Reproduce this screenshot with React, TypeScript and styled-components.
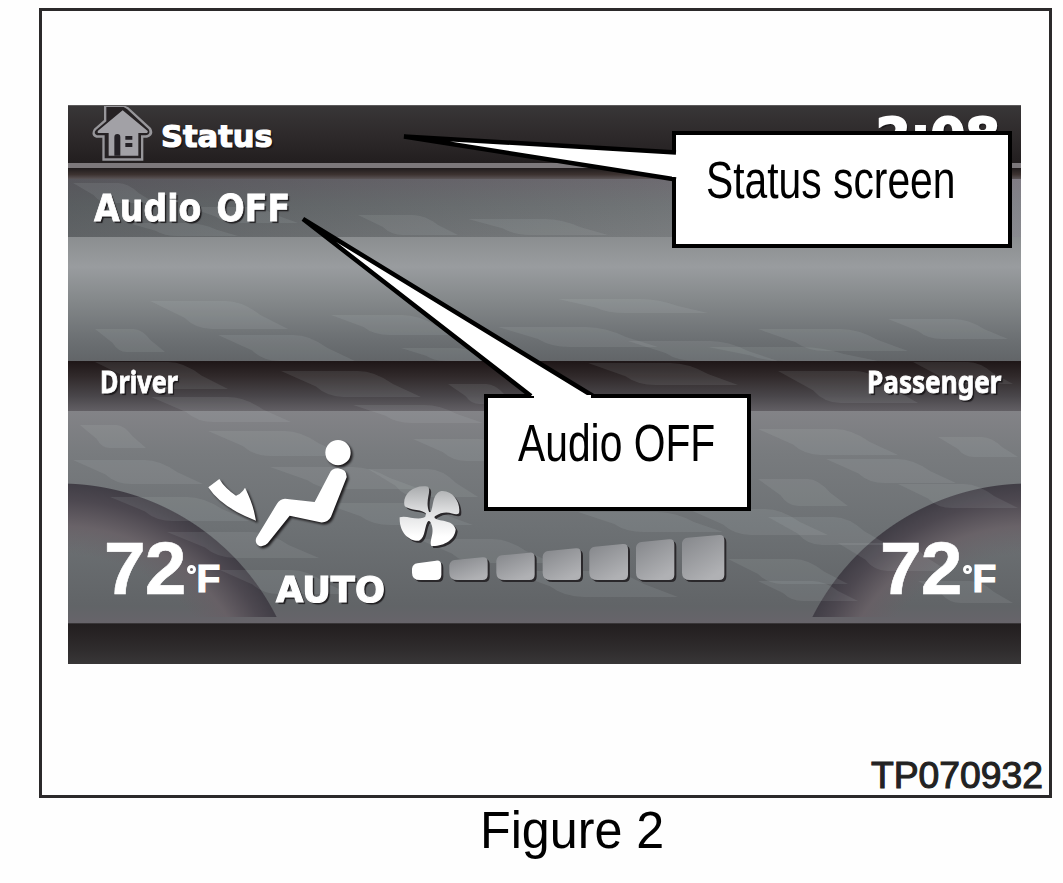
import React from 'react';
import styled, { createGlobalStyle } from 'styled-components';

const GlobalStyle = createGlobalStyle`
  *, *::before {
    box-sizing: border-box;
  }
  body {
    margin: 0;
    background-color: #fefefe;
    font-family: 'Liberation Sans', Arial, sans-serif;
  }
`;

const Page = styled.div`
  display: flex;
  flex-direction: column;
  width: 1063px;
  height: 883px;
  padding: 8px 11px 0 39px;
  overflow: hidden;
`;

const Frame = styled.div`
  display: flex;
  flex-direction: column;
  height: 790px;
  padding: 94px 26px 0;
  border: 3px solid #2b292a;
`;

const Screen = styled.div`
  position: relative;
  display: flex;
  flex-direction: column;
  width: 953px;
  height: 559px;
  color: #fff;
`;

const Header = styled.div`
  display: flex;
  justify-content: space-between;
  height: 58px;
  padding: 0 21px 0 23px;
  border-top: 1px solid #5c5a5b;
  background: linear-gradient(#383637, #2e2a2b 50%, #221e1f);
`;

const HeaderTitle = styled.div`
  display: flex;
  gap: 8px;

  svg {
    display: block;
  }
`;

const Text = styled.div<{
  $size: number;
  $line: number;
  $scale?: number;
  $stroke?: number;
  $right?: boolean;
  $font?: string;
}>`
  font-family: ${(p) => p.$font || "'DejaVu Sans'"}, sans-serif;
  font-size: ${(p) => p.$size}px;
  line-height: ${(p) => p.$line}px;
  font-weight: bold;
  white-space: nowrap;
  word-spacing: 4px;
  -webkit-text-stroke: ${(p) => p.$stroke || 0}px #fff;
  transform: scaleX(${(p) => p.$scale || 1});
  transform-origin: ${(p) => (p.$right ? 'right' : 'left')} center;
  text-shadow: 2px 2px 1px rgba(20, 18, 20, 0.85);
`;

const Divider = styled.div`
  height: 16px;
  border-top: 5px solid #7c787b;
  background: linear-gradient(#1f1b1c, #3d3331 60%, #5b5557);
`;

const AudioRow = styled.div`
  height: 58px;
  padding: 0 26px;
  background:
    linear-gradient(90deg, rgba(20, 24, 28, 0.28), rgba(20, 24, 28, 0.05) 60%, rgba(190, 180, 200, 0.2)),
    linear-gradient(#716e74, #74787a 45%, #7d8082);
`;

const AudioBody = styled.div`
  height: 124px;
  background: linear-gradient(#8b8e90, #999c9f 24%, #85898b 50%, #6c7073 82%, #626568);
`;

const ZoneBand = styled.div`
  display: flex;
  justify-content: space-between;
  height: 50px;
  padding: 0 20px 0 32px;
  background: linear-gradient(#1e1617, #30292a 30%, #49464a 70%, #625f64);
`;

const Climate = styled.div`
  display: flex;
  height: 212px;
  background:
    radial-gradient(circle 243px at -8px 315px, transparent 172px, rgba(104, 95, 101, 0.8) 200px, #4d4850 226px, #413e46 242px, transparent 243px) 0 0 / 100% 206px no-repeat,
    radial-gradient(circle 243px at 961px 315px, transparent 172px, rgba(104, 95, 101, 0.8) 200px, #4d4850 226px, #413e46 242px, transparent 243px) 0 0 / 100% 206px no-repeat,
    linear-gradient(#838387, #787b7e 20%, #6d7174 55%, #616467 92%, #67646a);
`;

const Footer = styled.div`
  flex: 1;
  background: linear-gradient(#221e1f, #2e2b2c 60%, #383637);
  border-top: 1px solid #383537;
`;

const Temperature = styled.div`
  position: relative;
  display: flex;
  align-items: flex-start;
  width: 139px;
  padding: 117px 0 0 36px;
  font-weight: bold;
`;

const Degrees = styled.span`
  font-size: 75px;
  line-height: 80px;
  letter-spacing: -1px;
  -webkit-text-stroke: 0.6px #fff;
`;

const Unit = styled.span`
  display: flex;
  font-size: 39px;
  line-height: 40px;
  padding-top: 31px;
  -webkit-text-stroke: 1.2px #fff;

  &::before {
    content: '';
    width: 9px;
    height: 9px;
    margin: 6px 0 0 2px;
    border: 3.5px solid #fff;
    border-radius: 50%;
  }
`;

const Airflow = styled.div`
  display: flex;
  flex-direction: column;
  width: 191px;
  padding-top: 25px;

  svg {
    display: block;
    overflow: visible;
    filter: drop-shadow(2px 2px 1px #1c1a1c);
  }
`;

const AutoLabel = styled.div`
  padding: 16px 0 0 69px;
`;

const Fan = styled.div`
  display: flex;
  flex-direction: column;
  width: 446px;
  padding-top: 74px;

  svg {
    display: block;
    overflow: visible;
    filter: drop-shadow(2.5px 2px 0.5px #2a282b);
  }
`;

const FanLevels = styled.div`
  padding: 0 0 0 14px;
  margin-top: -13px;
`;

const Texture = styled.svg`
  position: absolute;
  left: 0;
  top: 74px;
  pointer-events: none;
`;

const Callout = styled.div<{ $x: number; $y: number; $w: number; $h: number }>`
  position: absolute;
  left: ${(p) => p.$x}px;
  top: ${(p) => p.$y}px;
  width: ${(p) => p.$w}px;
  height: ${(p) => p.$h}px;
  padding: 18px 0 0 30px;
  border: 4px solid #000;
  background-color: #fff;
  color: #000;
`;

const CalloutText = styled.div<{ $scale: number }>`
  font-size: 51px;
  line-height: 56px;
  white-space: nowrap;
  transform: scaleX(${(p) => p.$scale});
  transform-origin: left center;
`;

const Pointers = styled.svg`
  position: absolute;
  left: 0;
  top: 0;
  pointer-events: none;
`;

const DrawingNumber = styled.div`
  margin: auto -20px 0 0;
  align-self: flex-end;
  color: #222;
  font-size: 37.3px;
  line-height: 40px;
  -webkit-text-stroke: 1.1px #222;
`;

const Caption = styled.div`
  padding: 5px 0 0 440px;
  color: #000;
  font-size: 51px;
  line-height: 56px;
  white-space: nowrap;
  transform: scaleX(0.985);
`;

// x, y, width, height of each light streak behind the panels
const streaks = [
  [5, 4, 82, 20], [60, 44, 110, 13], [120, 28, 110, 16], [290, 36, 100, 20], [400, 40, 140, 16],
  [82, 122, 138, 28], [27, 150, 70, 23], [150, 156, 137, 26], [263, 136, 130, 20], [333, 169, 100, 13],
  [430, 148, 160, 20], [560, 162, 150, 20], [690, 150, 150, 22], [820, 140, 120, 20], [490, 120, 150, 14], [640, 168, 170, 14],
  [27, 183, 133, 27], [213, 192, 140, 26], [83, 218, 140, 25], [285, 226, 130, 18], [380, 205, 70, 20],
  [520, 184, 150, 22], [710, 192, 140, 32], [845, 183, 100, 22],
  [12, 246, 66, 23], [140, 252, 139, 25], [345, 260, 120, 22], [690, 250, 140, 26], [870, 258, 80, 20],
  [5, 281, 130, 24], [202, 288, 150, 22], [300, 290, 110, 28], [758, 280, 130, 24],
  [42, 318, 140, 24], [255, 324, 150, 22], [690, 300, 90, 27], [830, 305, 120, 24],
  [99, 353, 152, 26], [350, 360, 135, 24], [510, 333, 145, 20], [620, 330, 140, 26], [700, 338, 120, 28],
  [152, 391, 130, 24], [440, 392, 170, 26], [660, 380, 120, 25], [770, 364, 110, 28], [690, 402, 100, 20], [850, 402, 95, 22],
];

// x, width, top of each fan speed bar
const levels = [
  [0, 88, 77], [112, 115, 67], [253, 115, 53], [392, 115, 40], [532, 116, 27], [672, 115, 13], [810, 127, 0],
];

const Streak = ({ x, y, w, h }: { x: number; y: number; w: number; h: number }) => (
  <path
    d={`M${x} ${y} h${w * 0.55} q${w * 0.12} 0 ${w * 0.25} ${h * 0.5} l${w * 0.2} ${h * 0.5} h${-w * 0.55} q${-w * 0.12} 0 ${-w * 0.2} ${-h * 0.4} z`}
  />
);

const HomeIcon = () => (
  <svg width="62" height="57" viewBox="0 0 186 171">
    <path d="M39 0 H103 L112 4 L180 66 Q192 88 168 95 H157 V164 H34 V95 H16 Q-3 88 9 68 L39 42 Z" fill="#97969a" />
    <path d="M46 3 H98 L108 9 L173 70 Q181 84 165 88 H150 V157 H41 V88 H18 Q6 82 15 72 L46 46 Z" fill="#262224" />
    <path d="M95 13 L170 75 Q172 81 164 81 H142 V149 H53 V81 H25 Q17 81 21 74 Z" fill="#a2a1a6" />
    <path d="M70 94 Q70 84 79 84 Q88 84 88 94 V149 H70 Z M103 90 H124 V101 H103 Z M103 111 H124 V123 H103 Z" fill="#242126" />
  </svg>
);

const SeatIcon = () => (
  <svg width="150" height="116" viewBox="18 18 450 348" fill="#fff">
    <circle cx="411" cy="68" r="38" />
    <path d="M386 130 Q392 115 411 115 Q438 118 437 142 L390 260 Q380 279 358 277 L266 257 L200 340 Q190 351 175 348 Q160 340 166 323 L228 221 Q236 207 252 206 L341 216 Z" />
    <path d="M55 147 L22 172 Q60 232 165 272 Q158 225 132 173 L126 182 Q118 192 105 197 Q72 175 55 147 Z" />
  </svg>
);

const FanIcon = () => (
  <svg width="64" height="63" viewBox="55 45 192 189">
    <defs>
      <linearGradient id="fan" gradientUnits="userSpaceOnUse" x1="0" y1="48" x2="0" y2="200">
        <stop offset="0" stopColor="#a9abad" />
        <stop offset="0.5" stopColor="#dedfe0" />
        <stop offset="1" stopColor="#fff" />
      </linearGradient>
    </defs>
    <g fill="url(#fan)">
      <path d="M142 134 C130 115 92 124 75 108 C66 78 98 42 145 50 C157 66 133 92 150 130 Z" />
      <path d="M150 130 C164 116 154 72 185 63 C220 60 244 98 238 130 C224 142 207 112 163 140 Z" />
      <path d="M160 140 C176 158 220 145 228 178 C226 210 192 230 155 228 C147 208 172 184 148 150 Z" />
      <path d="M148 150 C132 166 140 202 118 212 C92 215 58 190 60 142 C82 133 118 158 144 136 Z" />
      <circle cx="151" cy="140" r="14" />
    </g>
  </svg>
);

const LevelBars = () => (
  <svg width="313" height="46" viewBox="0 0 939 138">
    <defs>
      <linearGradient id="level" x1="0" y1="0" x2="0.6" y2="1">
        <stop offset="0" stopColor="#84868a" />
        <stop offset="1" stopColor="#b0b1b4" />
      </linearGradient>
    </defs>
    {levels.map(([x, w, top], i) => (
      <path
        key={i}
        fill={i === 0 ? '#fff' : 'url(#level)'}
        d={`M${x} ${top + 24} q2 -14 16 -16 L${x + w - 16} ${top} q16 -2 16 16 V119 q0 16 -16 16 H${x + 24} Q${x} 135 ${x} 113 Z`}
      />
    ))}
  </svg>
);

const TempReadout = () => (
  <Temperature>
    <Degrees>72</Degrees>
    <Unit>F</Unit>
  </Temperature>
);

function App() {
  return (
    <>
      <GlobalStyle />
      <Page>
        <Frame>
          <Screen>
            <Texture width="953" height="444" fill="rgba(205, 215, 215, 0.1)">
              {streaks.map(([x, y, w, h], i) => (
                <Streak key={i} x={x} y={y} w={w} h={h} />
              ))}
            </Texture>

            <Header>
              <HeaderTitle>
                <HomeIcon />
                <Text $size={30.5} $line={62} $stroke={1.2}>Status</Text>
              </HeaderTitle>
              <Text $size={50} $line={60} $stroke={2}>2:08</Text>
            </Header>
            <Divider />
            <AudioRow>
              <Text $size={38} $line={58} $scale={0.875} $stroke={0.8}>Audio OFF</Text>
            </AudioRow>
            <AudioBody />
            <ZoneBand>
              <Text $size={30} $line={41} $scale={0.84} $stroke={0.8} $font="'Noto Sans'">Driver</Text>
              <Text $size={30} $line={41} $scale={0.87} $stroke={0.8} $font="'Noto Sans'" $right>Passenger</Text>
            </ZoneBand>
            <Climate>
              <TempReadout />
              <Airflow>
                <SeatIcon />
                <AutoLabel>
                  <Text $size={36} $line={43} $scale={0.98} $stroke={1.2}>AUTO</Text>
                </AutoLabel>
              </Airflow>
              <Fan>
                <FanIcon />
                <FanLevels>
                  <LevelBars />
                </FanLevels>
              </Fan>
              <TempReadout />
            </Climate>
            <Footer />

            <Callout $x={604} $y={26} $w={340} $h={117}>
              <CalloutText $scale={0.8}>Status screen</CalloutText>
            </Callout>
            <Callout $x={416} $y={289} $w={267} $h={117}>
              <CalloutText $scale={0.8}>Audio OFF</CalloutText>
            </Callout>
            <Pointers width="953" height="559" fill="#fff" stroke="#000" strokeWidth="4.5">
              <path d="M608 47.5 L336 31.5 L608 74.5" />
              <path d="M463 291 L235 114 L525 291" />
              <path d="M607 50 V72 M466 293 H523" stroke="#fff" strokeWidth="6" />
            </Pointers>
          </Screen>
          <DrawingNumber>TP070932</DrawingNumber>
        </Frame>
        <Caption>Figure 2</Caption>
      </Page>
    </>
  );
}

export default App;
